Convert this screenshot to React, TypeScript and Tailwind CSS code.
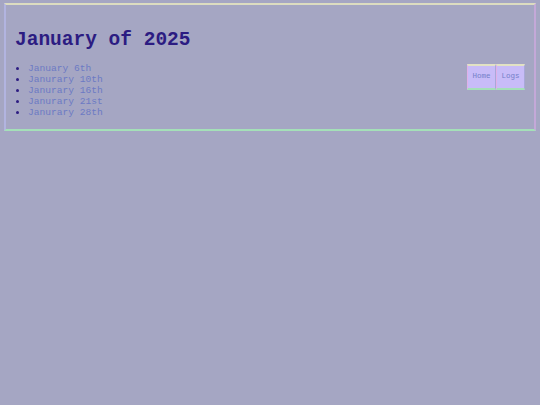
export default function App() {
  const days = ['January 6th', 'Janurary 10th', 'Janurary 16th', 'Janurary 21st', 'Janurary 28th'];
  return (
    <div className="min-h-[405px] bg-[#a5a6c3] pt-[3px] px-[4px] font-['Liberation_Mono',monospace]">
      <div className="border-t-2 border-t-[#dcdcc0] border-l-2 border-l-[#b2b4e0] border-r-2 border-r-[#c4a8d8] border-b-2 border-b-[#a4e0b8] pl-[9px] pr-[9px] pt-[24px] pb-[11px]">
        <h1 className="text-[19.5px] leading-[22px] font-bold text-[#2c1c82] mb-[12px]">January of 2025</h1>
        <div className="flex items-start justify-between">
          <ul className="text-[9.6px] leading-[11px] text-[#6c7ac4] list-disc pl-[13px] marker:text-[#2c1c82]">
            {days.map((d) => (
              <li key={d}>{d}</li>
            ))}
          </ul>
          <div className="flex mt-[1px]">
            {['Home', 'Logs'].map((b) => (
              <button
                key={b}
                className="w-[29px] h-[26px] bg-[#c8bcf8] text-[7.5px] font-normal text-[#7480c8] border-t-2 border-t-[#e2e2c4] border-b-2 border-b-[#a4e0b8] border-l border-l-[#e0b0e8] border-r border-r-[#a8a8d8]"
              >
                {b}
              </button>
            ))}
          </div>
        </div>
      </div>
    </div>
  );
}
